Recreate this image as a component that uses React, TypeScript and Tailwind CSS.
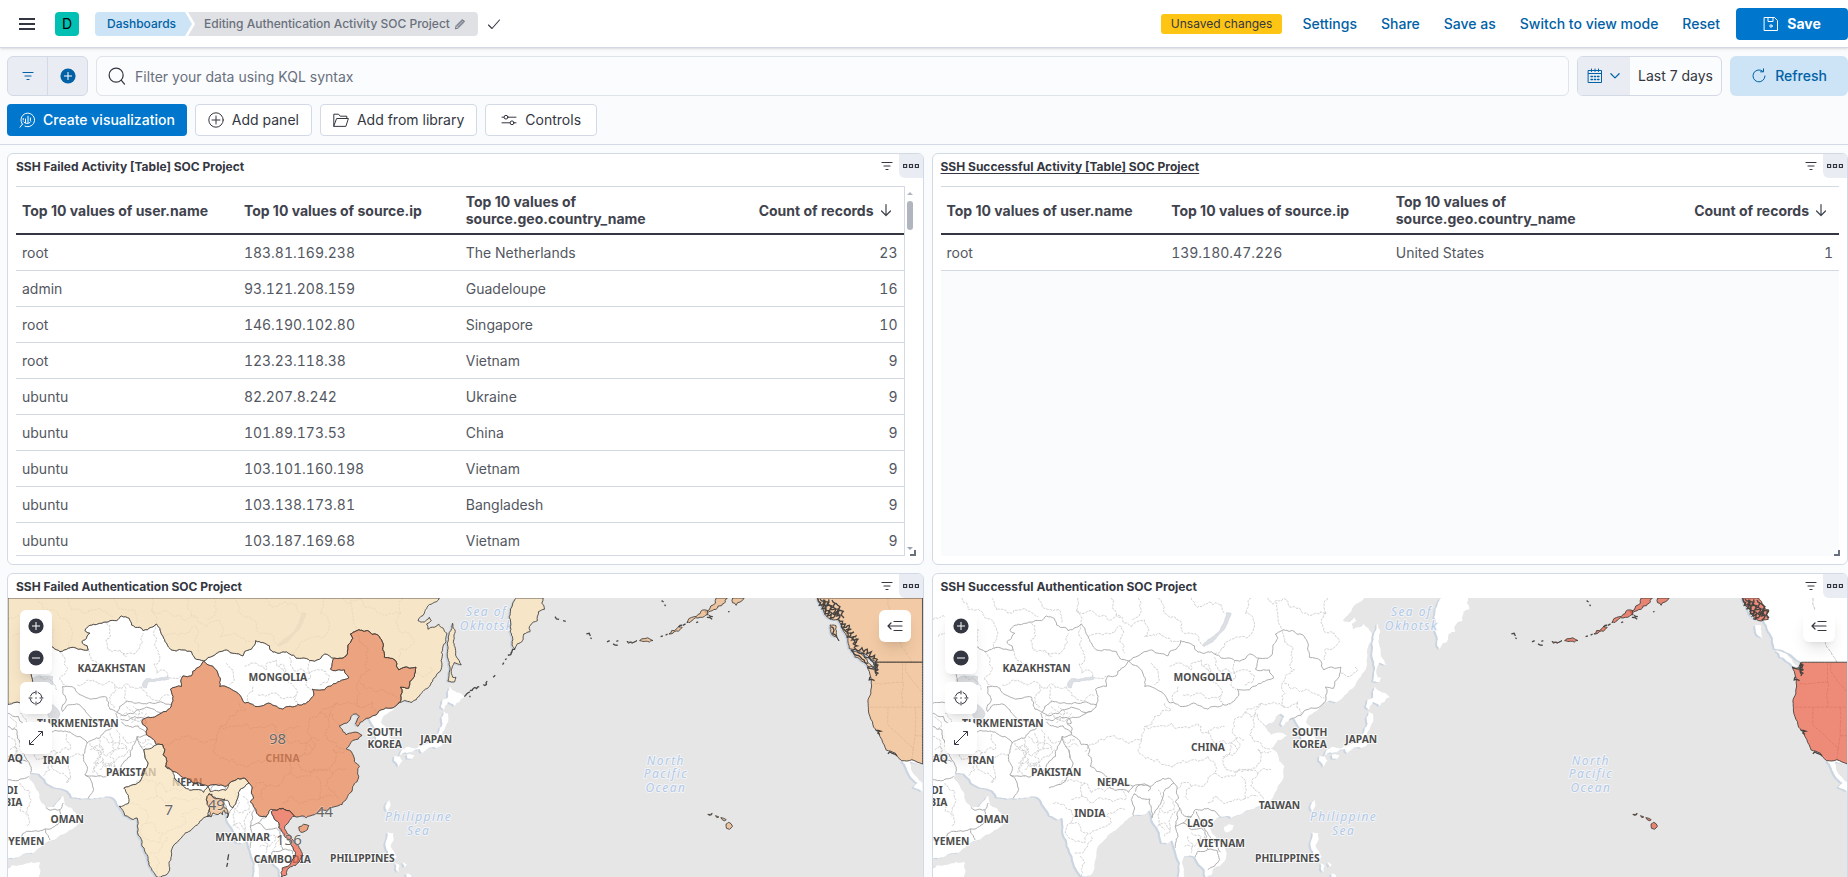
import React from "react";

/* ---------- geometry helpers for the maps ---------- */

type Pt = [number, number];

const parse = (s: string): Pt[] =>
  s.trim().split(/\s+/).map((p) => p.split(",").map(Number) as Pt);

const noise = (x: number, y: number) => {
  const v = Math.sin(Math.round(x) * 12.9898 + Math.round(y) * 78.233) * 43758.5453;
  return (v - Math.floor(v)) * 2 - 1;
};

/* Midpoint displacement; depends on the end points only, so shared borders agree. */
const split = (a: Pt, b: Pt, amp: number, out: Pt[]) => {
  const dx = b[0] - a[0];
  const dy = b[1] - a[1];
  const len = Math.hypot(dx, dy);
  if (len < 9) {
    out.push(b);
    return;
  }
  const mx = (a[0] + b[0]) / 2;
  const my = (a[1] + b[1]) / 2;
  const sign = a[0] < b[0] || (a[0] === b[0] && a[1] < b[1]) ? 1 : -1;
  const d = noise(mx, my) * amp * sign;
  const m: Pt = [mx - dy * d, my + dx * d];
  split(a, m, amp, out);
  split(m, b, amp, out);
};

const path = (s: string, amp = 0.14, closed = false) => {
  const pts = parse(s);
  if (closed) pts.push(pts[0]);
  const out: Pt[] = [pts[0]];
  for (let i = 1; i < pts.length; i++) {
    const edge =
      (pts[i][0] === pts[i - 1][0] && (pts[i][0] <= 24 || pts[i][0] >= 2770)) ||
      (pts[i][1] === pts[i - 1][1] && (pts[i][1] <= 84 || pts[i][1] === 277 || pts[i][1] >= 924));
    split(pts[i - 1], pts[i], edge ? 0 : amp, out);
  }
  return "M" + out.map((p) => p[0].toFixed(1) + " " + p[1].toFixed(1)).join("L") + (closed ? "Z" : "");
};

/* ---------- land ---------- */

const RUSSIA_EAST =
  "1320,84 1300,100 1275,130 1256,152 1275,156 1290,142 1296,152 1282,162 1286,178 1305,172 1318,162 1332,175 1343,190 1340,215 1330,235 1328,285 1315,310 1290,350 1262,375 1235,398 1215,392 1195,402";
const CHINA_NE = "1195,402 1205,385 1203,352 1228,355 1245,320 1250,292 1230,295 1198,300 1190,275 1155,262 1150,240 1135,195 1105,182 1070,183 1053,192 1060,205 1045,240 1040,258 1022,265 1005,265";
const MONGOLIA_N = "1005,265 975,252 960,268 930,272 890,265 870,252 830,248 812,240 810,228 768,212 755,238 735,245 730,258 680,240 640,258 612,273";
const KAZ_N =
  "612,273 585,265 575,245 550,240 510,235 490,200 470,162 455,172 430,182 420,172 395,165 388,145 365,138 350,152 300,160 262,172 255,182 270,190 255,210 246,215 262,228 265,240 235,238 205,235 180,245 160,232 130,225 100,240 92,290 98,335";
const CHINA_S_COAST =
  "1195,402 1175,415 1145,420 1120,438 1095,450 1075,470 1068,462 1080,440 1070,432 1055,440 1048,455 1020,468 1030,485 1040,495 1060,488 1088,497 1060,512 1040,537 1058,550 1065,575 1080,590 1078,620 1060,650 1040,690 1010,710 975,722 945,735 920,745 915,740 885,740";
const CHINA_WEST =
  "885,740 875,728 850,716 830,722 812,720 800,742 775,735 765,715 752,695 762,685 758,655 748,640 735,626 715,626 690,640 675,650 640,645 625,650 610,645 580,640 560,625 530,608 515,605 497,590 500,570 490,555 495,540 488,524 470,525 455,505 440,495 442,475 428,462 428,450 445,442 470,438 500,425 515,405 520,380 512,358 545,350 550,318 575,318 590,295 612,273";
const MONGOLIA_S =
  "612,273 625,285 650,300 662,325 660,350 690,355 715,370 733,398 800,402 850,418 895,404 918,402 935,385 942,378 938,358 975,360 985,350 1020,335 1048,324 1035,300 1000,302 993,298 1005,265";

const CHINA = path(CHINA_NE + " " + MONGOLIA_S.split(" ").reverse().slice(1).join(" ") + " " + CHINA_WEST.split(" ").reverse().slice(1).join(" ") + " " + CHINA_S_COAST.split(" ").reverse().slice(1).join(" "), 0.16, true);
const RUSSIA = path(RUSSIA_EAST + " " + CHINA_NE.split(" ").slice(1).join(" ") + " " + MONGOLIA_N.split(" ").slice(1).join(" ") + " " + KAZ_N.split(" ").slice(1).join(" ") + " 90,380 70,402 45,398 24,404 24,84", 0.16, true);
const INDIA = path(
  "432,540 455,535 470,525 488,524 495,540 490,555 500,570 497,590 520,607 524,625 545,645 580,660 612,668 625,650 632,666 650,662 678,662 690,640 715,626 735,626 748,640 730,655 716,668 712,690 700,714 690,706 684,692 660,688 640,682 628,672 620,690 630,715 626,738 600,755 575,780 545,805 520,830 515,860 510,895 495,918 470,921 450,890 435,845 425,810 415,780 412,745 400,750 375,738 358,710 385,702 372,655 400,645 435,600 445,580 436,565",
  0.16,
  true
);
const BANGLADESH = path("628,672 640,682 660,688 676,688 672,708 680,716 682,745 674,722 655,735 640,730 622,740 630,715 620,690", 0.4, true);
const VIETNAM = path(
  "815,726 830,722 850,716 875,728 885,740 870,752 855,772 862,790 885,820 903,840 905,865 888,888 868,896 862,915 845,924 848,895 865,890 880,868 888,848 872,818 846,785 838,760 822,742",
  0.2,
  true
);
const HAINAN = path("898,772 912,764 928,768 924,780 910,788 900,784", 0.2, true);
const SAKHALIN = path("1350,188 1360,160 1364,200 1368,235 1372,262 1386,285 1365,278 1356,300 1360,322 1370,322 1366,336 1346,334 1352,300 1344,255 1346,215", 0.14, true);
const KAMCHATKA = path("1552,84 1540,105 1533,130 1535,165 1540,200 1547,237 1570,212 1574,192 1592,186 1594,166 1615,152 1618,125 1636,118 1628,100 1632,84", 0.16, true);

const ASIA = path(
  "24,84 " + RUSSIA_EAST +
    " 1182,420 1150,442 1145,458 1165,480 1175,510 1165,532 1140,536 1130,515 1132,490 1124,470 1112,448 1095,450 " +
    "1075,470 1068,462 1080,440 1070,432 1055,440 1048,455 1020,468 1030,485 1040,495 1060,488 1088,497 1060,512 1040,537 1058,550 1065,575 1080,590 1078,620 1060,650 1040,690 1010,710 975,722 945,735 920,745 915,740 885,740 870,752 855,772 862,790 885,820 903,840 905,865 888,888 868,896 862,915 845,924 840,900 822,882 812,862 795,858 780,860 772,880 780,924 762,924 766,880 752,840 742,812 728,822 712,820 706,790 690,765 682,745 674,722 655,735 626,738 600,755 575,780 545,805 520,830 515,860 510,895 495,918 470,921 450,890 435,845 425,810 415,780 412,745 400,750 375,738 358,710 338,683 265,686 215,682 205,665 170,655 140,640 118,612 90,608 86,625 105,650 122,695 138,714 162,712 180,690 190,678 194,705 215,715 241,752 225,772 190,795 145,815 100,850 60,860 24,866",
  0.1,
  true
);
const ISLES = [
  "24,896 70,885 120,878 116,924 24,924",
  "1352,350 1372,368 1396,380 1365,408 1346,396 1336,420 1325,412 1330,390 1346,384",
  "1333,425 1346,432 1342,462 1330,485 1318,512 1340,516 1322,530 1300,532 1268,550 1262,538 1240,545 1218,548 1200,556 1204,546 1230,532 1270,528 1292,508 1318,490 1330,462",
  "1186,558 1202,560 1210,574 1198,592 1192,580 1184,572",
  "1222,556 1245,556 1240,566 1224,566",
  "1172,688 1173,702 1164,725 1158,716 1162,698",
  "1165,788 1182,790 1182,812 1174,832 1184,846 1192,862 1180,870 1166,845 1158,825",
  "1188,880 1200,886 1198,908 1190,900",
  "1210,876 1222,884 1216,892",
  "1222,912 1236,918 1234,924 1222,924",
].map((s) => path(s, 0.16, true));

const CANADA = path("2455,84 2470,110 2485,140 2505,150 2520,148 2540,190 2548,205 2552,236 2586,246 2612,262 2634,277 2772,277 2772,84", 0.1, true);
const USA_WEST = path("2634,277 2636,300 2628,300 2606,291 2616,320 2617,370 2608,396 2614,440 2625,472 2650,510 2663,541 2690,550 2709,573 2740,570 2772,583 2772,277", 0.08, true);
const MEXICO = path("2711,574 2724,594 2735,618 2758,640 2744,652 2772,666 2772,640 2755,622 2738,600 2734,576 2772,586 2740,570", 0.08, true);
const VANCOUVER = path("2558,240 2585,250 2605,268 2626,292 2608,290 2590,274 2570,262", 0.14, true);
const HAIDA = path("2494,165 2512,167 2513,188 2521,213 2504,198 2496,184", 0.16, true);
const PANHANDLE = path("2455,84 2505,84 2515,100 2536,120 2534,148 2520,150 2505,152 2490,148 2482,128 2466,108", 0.2, true);
const ALEUTIANS = [
  "2152,84 2186,84 2176,100 2158,108 2140,122 2124,134 2118,124 2136,108",
  "2202,84 2236,84 2224,96 2212,106 2201,98",
  "2064,158 2070,146 2086,140 2106,124 2126,122 2128,134 2104,142 2080,152",
  "2010,192 2018,182 2034,176 2040,168 2050,172 2038,184 2022,190",
  "1922,212 1938,206 1954,208 1962,212 1940,214",
  "1884,214 1896,216 1914,212 1900,220 1888,220",
].map((s) => path(s, 0.24, true));
const HAWAII = [
  "2182,763 2190,758 2201,770 2192,779 2183,776",
  "2127,734 2140,731 2138,736 2130,737",
  "2166,744 2182,750 2178,754 2170,750",
  "2150,738 2160,742 2154,744",
].map((s) => path(s, 0.16, true));
const SPECKS = [
  "2040,172 2050,166", "1842,222 1856,226", "1852,214 1858,212", "1985,200 1992,198", "2000,196 2006,192", "2052,166 2060,162",
  "2092,158 2098,156", "2124,142 2140,148", "2130,136 2142,140", "1988,92 1994,96", "1997,104 2000,108", "2188,126 2192,124",
  "1762,192 1774,198", "1774,204 1778,206", "1824,216 1832,212",
].map((s) => path(s, 0.5)).join("");
const KURILS = [
  "1395,380 1402,372 1412,366", "1412,362 1422,356 1440,350", "1452,344 1464,334", "1482,322 1488,316", "1510,284 1514,278",
  "1518,270 1522,266", "1526,256 1538,246 1548,238", "1535,250 1540,240", "1410,380 1414,380", "1668,140 1680,148", "1692,152 1700,154",
].map((s) => path(s, 0.4)).join("");

/* Narrow inlets and islets around the Alaskan panhandle and Puget Sound. */
const PANHANDLE_INLETS = [
  "2458,86 2466,98 2462,106 2474,104 2470,116 2482,112 2478,126 2490,122 2486,138 2498,132 2494,148 2506,142",
  "2464,88 2478,92 2474,100 2490,98 2484,108 2500,108 2496,118 2510,116 2506,128 2520,124 2514,138 2530,134",
  "2476,88 2472,110 2484,106 2480,132 2494,128", "2490,88 2486,102 2502,112 2492,124 2512,132 2502,146",
  "2500,90 2510,100 2504,112 2520,118 2512,128 2524,140 2514,150", "2512,100 2524,110 2518,120 2534,124 2528,136 2536,144",
];
const PUGET = [
  "2632,278 2628,288 2638,286 2630,296 2638,300 2630,306 2638,310 2632,318", "2606,292 2618,296 2630,294", "2636,282 2632,312",
  "2616,320 2612,330 2628,332", "2632,482 2646,484 2638,490 2644,494", "2668,552 2674,546 2684,552 2696,558",
];
const BC_INLETS = [
  "2520,150 2532,154 2526,164 2540,162 2532,174 2552,166 2542,180 2558,178 2546,190 2566,186 2552,200 2574,196 2560,210 2578,208 2564,222 2576,228 2566,234",
  "2528,160 2536,178 2548,188 2546,202 2560,204 2568,226", "2556,242 2570,236 2582,242 2590,234 2596,246 2606,238 2604,252 2618,246 2612,260 2628,256 2622,268 2636,268 2628,280",
  "2560,244 2574,256 2586,262 2598,276 2608,280", "2576,244 2594,250 2600,262 2616,270 2626,286", "2498,170 2506,182 2502,192 2514,200",
];
const INLETS_ALASKA = [...PANHANDLE_INLETS, ...PUGET].map((s) => path(s, 0.25)).join("");
const INLETS_ALL = INLETS_ALASKA + BC_INLETS.map((s) => path(s, 0.25)).join("");

/* ---------- base map lines ---------- */

const COUNTRY_LINES = [
  CHINA_NE, MONGOLIA_N, KAZ_N, CHINA_WEST, MONGOLIA_S,
  "1195,402 1175,415 1145,420 1120,438 1095,450",
  "188,425 188,350 225,355 265,385 320,382 330,418 352,428 375,398 410,400 450,398 515,405",
  "188,425 205,405 230,402 255,420 270,440 300,455 340,470 352,462 348,430",
  "352,428 372,438 400,432 412,420 440,412 470,425 500,425",
  "362,448 385,452 405,440 430,445 440,460 428,462",
  "365,456 380,468 415,468 430,480 442,490",
  "100,470 130,488 160,485 200,485 240,500 262,520 300,505 330,480 352,462",
  "262,520 250,555 262,590 255,615 280,655 265,686",
  "255,615 310,622 355,605 370,580 392,560 398,530 412,500 440,495",
  "412,500 432,540 436,565",
  "24,470 50,480 60,530 80,570 92,608",
  "24,430 55,440 70,462 100,470",
  "24,630 60,628 86,620",
  "24,560 50,560 80,575",
  "138,714 150,722 180,720 190,700",
  "180,720 178,760 135,778 80,785 60,805 24,810",
  "135,778 150,812",
  "372,655 400,645 435,600 445,580 436,565 432,540",
  "524,625 545,645 580,660 612,668 625,650",
  "632,666 640,648 660,642 678,655 670,664",
  "628,672 640,682 660,688 676,688 680,716 682,745",
  "628,672 620,690 630,715 626,738",
  "748,640 730,655 716,668 712,690 700,714 690,730 682,745",
  "765,715 752,770 760,800 752,835",
  "752,770 775,760 790,745 800,742",
  "775,760 800,780 830,775 846,800 850,840",
  "812,862 820,845 850,840 880,845 885,870 870,890 850,900",
  "815,726 822,742 838,760 846,785 872,818 888,848",
  "24,400 45,398 70,402 90,425",
].map((s) => path(s, 0.16)).join("");

const REGION_LINES = [
  "24,150 60,140 95,165 130,150 160,180 150,232", "40,200 80,190 120,210 140,230", "110,84 130,120 170,125 200,150 215,200 210,238",
  "200,84 215,120 260,130 300,115 340,140", "340,84 352,110 395,120 410,160", "460,84 455,120 470,160", "455,120 510,130 560,150 590,140 620,170",
  "560,84 570,120 590,140", "490,200 520,190 560,190 590,170 585,215 600,250", "620,170 660,150 660,200 700,190 740,215 768,212",
  "640,84 650,120 620,150", "700,84 720,130 760,150 800,190 835,228", "800,84 830,110 880,100 900,130", "870,252 900,220 960,200 990,170 980,84",
  "1030,84 1060,130 1075,180", "1050,95 1110,110 1140,130 1205,130 1210,84", "1205,130 1195,170 1230,190 1245,215 1205,235 1200,270", "1250,310 1275,320 1300,300 1290,290",
  "320,160 330,180 318,210 325,240 370,250 420,230 430,190", "370,250 380,260", "265,240 275,270 310,280", "470,162 465,220 480,260 470,310", "232,345 260,332 330,335 345,350 425,350", "345,350 342,415",
  "375,350 380,400", "425,350 450,380 510,380", "470,310 520,325 550,318", "180,245 180,330 200,350", "120,320 150,330 170,360",
  "680,280 700,300 690,345", "735,290 760,280 800,300 830,270", "760,350 750,398", "775,375 820,370 890,375 895,404", "830,270 840,330 870,340 890,375",
  "870,262 880,300 930,310 935,360", "930,272 932,310 960,300 990,320 960,345", "840,285 860,300 850,320 880,318",
  "480,545 520,518 600,515 650,510 660,470 740,460 820,462 850,490 900,470", "650,510 640,540 700,570 760,580 820,575 850,560",
  "720,400 740,420 690,440 660,470", "850,490 870,520 940,540 930,470 960,430 1000,435", "940,540 900,560 905,600 960,600", "850,560 870,610 830,650 800,650 790,690",
  "870,610 930,620 960,600 1000,610 1040,600", "960,430 1010,400 1080,412 1120,395 1130,440", "1000,435 1020,468", "1010,400 990,440 980,480 1010,520 1040,537",
  "1080,412 1082,370 1110,300 1105,262 1075,182", "1080,340 1120,360 1170,370 1200,385", "1000,540 1005,580 960,600", "1000,540 1040,545", "950,620 955,690 1000,680",
  "850,700 870,680 930,690 955,690", "1000,610 990,660 1020,690", "895,560 920,520 960,510", "800,650 770,640 758,655",
  "400,645 440,630 470,640 500,670 540,665 560,650", "440,690 470,680 500,700 550,690 600,690", "385,702 440,720 440,760 480,790 520,780 560,760 545,740 600,720",
  "440,760 430,800 480,820 490,790", "450,850 480,840 500,800", "470,921 480,880 465,860", "600,690 590,660", "470,680 480,640",
  "270,540 300,530 320,560 350,540 380,530", "280,580 310,570 330,600 350,570 390,540", "300,510 310,540 290,570 300,620", "330,490 340,520 330,560 345,590",
  "350,480 360,510 355,540", "270,520 300,540 280,610", "362,440 380,428 400,450 420,430 400,410", "380,410 400,425 430,430", "440,430 420,455 395,460",
  "285,530 300,560 320,590 340,580", "310,500 330,520 360,520 380,540", "300,600 320,580 350,590", "370,500 385,520 405,515",
  "410,510 430,520 450,510", "420,530 440,525 460,530", "385,440 395,448 410,452",
  "60,540 100,530 110,570 140,560 150,600 130,620", "120,490 130,540 170,550 210,540 200,490", "170,550 160,600 200,640 210,610 215,560", "215,560 250,555",
  "60,430 80,450 90,500", "24,500 45,510 40,560", "60,640 90,700 80,770", "24,690 60,700 80,740", "30,440 50,460 40,480", "30,540 45,530 60,560",
  "700,660 720,700 700,740 720,780", "730,680 740,740 720,800", "800,790 830,800 810,830 780,830", "790,800 800,850", "840,800 820,840", "710,720 730,730 745,720", "700,770 720,760 740,780",
].map((s) => path(s, 0.28)).join("");

const STATE_LINES =
  path("2668,84 2668,150 2700,210 2740,277", 0.1) +
  path("2628,342 2670,340 2715,338 2710,380 2712,412", 0.06) +
  path("2712,280 2712,338", 0) +
  path("2722,280 2722,305 2740,330 2772,365", 0.1) +
  path("2614,412 2772,412", 0) +
  path("2668,412 2668,465 2745,535 2740,570", 0.03) +
  path("2750,412 2750,500 2742,545", 0.03) +
  path("2750,498 2772,498", 0);

const WATER = [
  "92,330 120,318 158,320 160,345 135,335 118,345 100,350",
  "140,405 160,405 180,430 175,445 185,460 160,470 148,445",
  "428,342 440,326 480,324 504,320 508,328 480,332 446,336 440,354 430,352",
  "920,130 912,150 898,180 870,210 838,230 836,222 866,200 890,172 902,145 906,128",
].map((s) => path(s, 0.1, true)).join("");

type Label = { x: number; y: number; t: string };

const COMMON_LABELS: Label[] = [
  { x: 335, y: 307, t: "KAZAKHSTAN" },
  { x: 835, y: 332, t: "MONGOLIA" },
  { x: 234, y: 471, t: "TURKMENISTAN" },
  { x: 46, y: 577, t: "AQ" },
  { x: 169, y: 583, t: "IRAN" },
  { x: 394, y: 619, t: "PAKISTAN" },
  { x: 36, y: 673, t: "DI" },
  { x: 40, y: 710, t: "BIA" },
  { x: 202, y: 759, t: "OMAN" },
  { x: 79, y: 826, t: "YEMEN" },
  { x: 566, y: 650, t: "NEPAL" },
  { x: 1156, y: 500, t: "SOUTH" },
  { x: 1156, y: 536, t: "KOREA" },
  { x: 1311, y: 519, t: "JAPAN" },
  { x: 1089, y: 876, t: "PHILIPPINES" },
];
const FAILED_LABELS: Label[] = [
  { x: 849, y: 576, t: "CHINA" },
  { x: 729, y: 814, t: "MYANMAR" },
  { x: 848, y: 879, t: "CAMBODIA" },
];
const SUCCESS_LABELS: Label[] = [
  { x: 850, y: 545, t: "CHINA" },
  { x: 495, y: 741, t: "INDIA" },
  { x: 827, y: 773, t: "LAOS" },
  { x: 890, y: 832, t: "VIETNAM" },
  { x: 1065, y: 717, t: "TAIWAN" },
];
const SEAS: Label[] = [
  { x: 1462, y: 139, t: "Sea of" },
  { x: 1462, y: 179, t: "Okhotsk" },
  { x: 1258, y: 755, t: "Philippine" },
  { x: 1258, y: 795, t: "Sea" },
  { x: 2001, y: 586, t: "North" },
  { x: 2001, y: 626, t: "Pacific" },
  { x: 2001, y: 666, t: "Ocean" },
];
const COUNTS: Label[] = [
  { x: 834, y: 522, t: "98" },
  { x: 507, y: 737, t: "7" },
  { x: 650, y: 721, t: "49" },
  { x: 975, y: 743, t: "44" },
  { x: 868, y: 826, t: "136" },
];

const Shape = ({ d, fill }: { d: string; fill: string }) => (
  <path d={d} fill={fill} fillOpacity={0.75} stroke="#3c3a38" strokeOpacity={0.85} strokeWidth={3} strokeLinejoin="round" />
);

function WorldMap({ failed }: { failed: boolean }) {
  const us = failed ? "#eeb887" : "#e7644b";
  const labels = [...COMMON_LABELS, ...(failed ? FAILED_LABELS : SUCCESS_LABELS)];
  return (
    <svg viewBox="24 84 2748 870" className="block w-full bg-[#e6e6e6] font-['Noto_Sans',sans-serif]" role="img" aria-label="Map of events by country">
      <g fill="#cbd5e1">
        <g transform="translate(-6 3)">
          <path d={ASIA} />
          {ISLES.map((d, i) => <path key={i} d={d} />)}
          <path d={SAKHALIN} />
          <path d={KAMCHATKA} />
          <path d={CANADA} />
          <path d={VANCOUVER} />
          <path d={HAIDA} />
          <path d={MEXICO} />
        </g>
      </g>
      <g fill="#ffffff">
        <path d={ASIA} />
        {ISLES.map((d, i) => <path key={i} d={d} />)}
        <path d={SAKHALIN} />
        <path d={KAMCHATKA} />
        <path d={HAINAN} />
        <path d={CANADA} />
        <path d={USA_WEST} />
        <path d={MEXICO} />
        <path d={VANCOUVER} />
        <path d={HAIDA} />
      </g>
      <path d={WATER} fill="#dddfe2" stroke="#cbd5e1" strokeWidth={2} />
      <path d={REGION_LINES} fill="none" stroke="#bdbdbd" strokeWidth={2} strokeDasharray="8 3" />
      <path d={COUNTRY_LINES} fill="none" stroke="#adadad" strokeWidth={3} />
      <path d={STATE_LINES} fill="none" stroke="#c4c4c4" strokeWidth={3} strokeDasharray="10 3" />

      <g fill="#4d4d4d" stroke="#ffffff" strokeOpacity={0.8} strokeWidth={6} strokeLinejoin="round" paintOrder="stroke" textAnchor="middle" fontSize={31} fontWeight={700}>
        {labels.map((l) => <text key={l.t} x={l.x} y={l.y}>{l.t}</text>)}
      </g>
      <g fill="#b3c9e6" stroke="#f2f4f7" strokeWidth={6} strokeLinejoin="round" paintOrder="stroke" textAnchor="middle" fontSize={36} fontStyle="italic" className="tracking-[0.12em]">
        {SEAS.map((l) => <text key={l.t + l.y} x={l.x} y={l.y}>{l.t}</text>)}
      </g>

      {failed && (
        <g>
          <Shape d={RUSSIA} fill="#f4dcb6" />
          <Shape d={SAKHALIN} fill="#f4dcb6" />
          <Shape d={KAMCHATKA} fill="#f4dcb6" />
          <Shape d={CHINA} fill="#e68456" />
          <Shape d={INDIA} fill="#f7e2bc" />
          <Shape d={BANGLADESH} fill="#eeb887" />
          <Shape d={HAINAN} fill="#e68456" />
          <Shape d={VIETNAM} fill="#e7644b" />
          <Shape d={CANADA} fill={us} />
          <Shape d={VANCOUVER} fill={us} />
          <Shape d={HAIDA} fill={us} />
          <path d={KURILS} fill="none" stroke="#4a4845" strokeWidth={4} />
          <path d="M687 854 L684 872 M684 880 L681 892" stroke="#4a4845" strokeWidth={4} />
        </g>
      )}
      {!failed && <Shape d={PANHANDLE} fill={us} />}
      <Shape d={USA_WEST} fill={us} />
      {ALEUTIANS.map((d, i) => <Shape key={i} d={d} fill={us} />)}
      {HAWAII.map((d, i) => <Shape key={i} d={d} fill={us} />)}
      <path d={SPECKS} fill="none" stroke="#4a4845" strokeWidth={4} />
      <path d={failed ? INLETS_ALL : INLETS_ALASKA} fill="none" stroke="#45423f" strokeWidth={4} />

      {failed && (
        <g fill="#696763" stroke="#ffffff" strokeOpacity={0.35} strokeWidth={4} paintOrder="stroke" textAnchor="middle" fontSize={45}>
          {COUNTS.map((l) => <text key={l.t} x={l.x} y={l.y}>{l.t}</text>)}
        </g>
      )}
    </svg>
  );
}

/* ---------- icons ---------- */

const Icon = ({ children, className = "size-4" }: { children: React.ReactNode; className?: string }) => (
  <svg viewBox="0 0 16 16" className={"shrink-0 " + className} fill="none" stroke="currentColor" strokeWidth={1} strokeLinecap="round" strokeLinejoin="round" aria-hidden="true">
    {children}
  </svg>
);

const FilterIcon = () => (
  <Icon><path d="M3 4.5h10M5 8h6M7 11.5h2" strokeWidth={1.2} /></Icon>
);
const BoxesIcon = () => (
  <Icon><path d="M.6 6.5h3v3h-3zM6.5 6.5h3v3h-3zM12.4 6.5h3v3h-3z" strokeWidth={1.2} strokeLinejoin="miter" /></Icon>
);
const FilledCircle = ({ plus }: { plus: boolean }) => (
  <svg viewBox="0 0 16 16" className="size-4" aria-hidden="true">
    <circle cx="8" cy="8" r="7.6" fill="currentColor" />
    <path d={plus ? "M8 4v8M4 8h8" : "M4 8h8"} stroke="#ffffff" strokeWidth={1} />
  </svg>
);
const ArrowDown = () => (
  <Icon><path d="M8 2.5v11M3.5 9 8 13.5 12.5 9" strokeWidth={1.2} /></Icon>
);

/* ---------- tables ---------- */

type Row = [string, string, string, number];

const FAILED_ROWS: Row[] = [
  ["root", "183.81.169.238", "The Netherlands", 23],
  ["admin", "93.121.208.159", "Guadeloupe", 16],
  ["root", "146.190.102.80", "Singapore", 10],
  ["root", "123.23.118.38", "Vietnam", 9],
  ["ubuntu", "82.207.8.242", "Ukraine", 9],
  ["ubuntu", "101.89.173.53", "China", 9],
  ["ubuntu", "103.101.160.198", "Vietnam", 9],
  ["ubuntu", "103.138.173.81", "Bangladesh", 9],
  ["ubuntu", "103.187.169.68", "Vietnam", 9],
];
const SUCCESS_ROWS: Row[] = [["root", "139.180.47.226", "United States", 1]];

function DataTable({ rows }: { rows: Row[] }) {
  const head = "border-t border-t-[#d3dae6] border-b-2 border-b-[#343741] px-1.5 text-left align-middle font-bold";
  const cell = "h-9 border-b border-[#d3dae6] px-1.5";
  return (
    <table className="w-full table-fixed border-separate border-spacing-0 bg-white text-sm leading-[17px] text-[#3f434d]">
      <thead>
        <tr className="h-[49px]">
          <th className={head}>Top 10 values of user.name</th>
          <th className={head}>Top 10 values of source.ip</th>
          <th className={head}>Top 10 values of source.geo.country_name</th>
          <th className={head}>
            <span className="flex items-center justify-end gap-1 pr-1">
              Count of records
              <ArrowDown />
            </span>
          </th>
        </tr>
      </thead>
      <tbody className="tabular-nums text-[#535761]">
        {rows.map((r) => (
          <tr key={r[1]}>
            <td className={cell}>{r[0]}</td>
            <td className={cell}>{r[1]}</td>
            <td className={cell}>{r[2]}</td>
            <td className={cell + " text-right"}>{r[3]}</td>
          </tr>
        ))}
      </tbody>
    </table>
  );
}

/* ---------- panels ---------- */

function Panel({ title, underline, children, className = "" }: { title: string; underline?: boolean; children: React.ReactNode; className?: string }) {
  return (
    <section className={"relative flex min-w-0 flex-col overflow-hidden rounded-md border border-[#d3dae6] bg-white " + className}>
      <header className="flex h-6 shrink-0 items-center">
        <h2 className={"flex-1 px-2 pt-0.5 text-xs font-bold text-[#343741] " + (underline ? "underline underline-offset-2" : "")}>{title}</h2>
        <button aria-label="Panel filters" className="flex size-6 items-center justify-center text-[#343741]"><FilterIcon /></button>
        <button aria-label="Panel options" className="flex size-6 items-center justify-center rounded-bl-md bg-[#e9edf3] text-[#343741]"><BoxesIcon /></button>
      </header>
      {children}
    </section>
  );
}

const ResizeHandle = () => (
  <span className="absolute right-[7px] bottom-2 size-1.5 border-r-2 border-b-2 border-[#69707d]" />
);

const mapButton = "flex size-8 items-center justify-center text-[#343741]";

function MapPanel({ title, failed }: { title: string; failed: boolean }) {
  return (
    <Panel title={title}>
      <div className="relative">
        <WorldMap failed={failed} />
        <div className="absolute top-3 left-3 flex flex-col gap-2">
          <div className="flex flex-col rounded-md bg-white shadow-lg">
            <button aria-label="Zoom in" className={mapButton}><FilledCircle plus /></button>
            <button aria-label="Zoom out" className={mapButton}><FilledCircle plus={false} /></button>
          </div>
          <button aria-label="Fit to data bounds" className={mapButton + " rounded-md bg-white shadow-lg"}>
            <Icon>
              <circle cx="8" cy="8" r="6" strokeDasharray="6.4 3" strokeDashoffset="-1.5" />
              <path d="M8 1v3M8 12v3M1 8h3M12 8h3M8 7.6v.8" />
            </Icon>
          </button>
          <button aria-label="Tools" className={mapButton + " rounded-md bg-white shadow-lg"}>
            <Icon><path d="M1.5 10.5v4h4M10.5 1.5h4v4M2 14 14 2" /></Icon>
          </button>
        </div>
        <button aria-label="Expand layers" className={mapButton + " absolute top-3 right-3 rounded-md bg-white shadow-lg"}>
          <Icon><path d="M1 8h14M4 5 1 8l3 3M7 3.5h8M7 12.5h8" strokeWidth={1.2} /></Icon>
        </button>
      </div>
    </Panel>
  );
}

const navLink = "text-sm font-medium text-[#0061a6]";
const toolButton = "flex h-8 items-center gap-2 rounded border border-[#d3dae6] bg-white text-sm text-[#343741]";

export default function App() {
  return (
    <div className="flex h-screen flex-col overflow-hidden bg-[#fafbfd] font-['Inter',sans-serif] text-[#343741]">
      <header className="relative flex h-12 shrink-0 items-center border-b border-[#d3dae6] bg-white pt-px pl-[19px] shadow">
        <button aria-label="Toggle navigation" className="flex size-4 flex-col justify-center gap-[3px]">
          <span className="h-0.5 w-4 bg-[#343741]" />
          <span className="h-0.5 w-4 bg-[#343741]" />
          <span className="h-0.5 w-4 bg-[#343741]" />
        </button>
        <div className="ml-5 flex size-6 items-center justify-center rounded bg-[#00bfb3] text-sm text-black">D</div>
        <nav aria-label="Breadcrumbs" className="ml-4 flex items-center text-xs font-medium">
          <a href="#dashboards" className="flex h-6 items-center rounded-l bg-[#cce4f5] pr-4 pl-3 text-[#0061a6] [clip-path:polygon(0_0,calc(100%-7px)_0,100%_50%,calc(100%-7px)_100%,0_100%)]">Dashboards</a>
          <span className="-ml-1 flex h-6 items-center gap-1 rounded-r bg-[#e0e1e4] pr-3 pl-4 text-[#69707d] [clip-path:polygon(0_0,100%_0,100%_100%,0_100%,7px_50%)]">
            Editing Authentication Activity SOC Project
            <Icon className="size-3"><path d="m2 14 1-4 8-8 3 3-8 8zM4 11 12 3M5 12l8-8" strokeWidth={1.3} /></Icon>
          </span>
        </nav>
        <span className="ml-2 text-[#343741]"><Icon><path d="m2.5 9 3.5 3.5L13.5 4" strokeWidth={1.1} /></Icon></span>
        <div className="ml-auto flex items-center">
          <span className="mr-5 rounded-[3px] bg-[#fec514] px-2.5 text-xs leading-5 text-[#343741]">Unsaved changes</span>
          <div className="mr-4 flex gap-6">
            <button className={navLink}>Settings</button>
            <button className={navLink}>Share</button>
            <button className={navLink}>Save as</button>
            <button className={navLink}>Switch to view mode</button>
            <button className={navLink}>Reset</button>
          </div>
          <button className="flex h-8 w-28 items-center justify-center gap-2 rounded bg-[#0077cc] text-sm font-bold text-white">
            <Icon><path d="M1.5 1.5h10l3 3v10h-13zM5 1.5v4h5v-4" strokeLinejoin="miter" /><circle cx="8" cy="10" r="1.2" /></Icon>
            Save
          </button>
        </div>
      </header>

      <div className="flex shrink-0 gap-2 pt-2 pl-[7px]">
        <div className="flex h-10 w-[81px] overflow-hidden rounded-md border border-[#d3dae6] bg-[#e9edf3] text-[#0061a6]">
          <button aria-label="Saved queries" className="flex flex-1 items-center justify-center border-r border-[#d3dae6]"><FilterIcon /></button>
          <button aria-label="Add filter" className="flex flex-1 items-center justify-center"><FilledCircle plus /></button>
        </div>
        <label className="flex h-10 flex-1 items-center gap-2 rounded-md border border-[#dfe3ea] bg-[#fbfcfd] px-2.5">
          <Icon className="size-5"><path d="M11.5 11.5 14 14.5" /><circle cx="7.3" cy="7.3" r="5.6" /></Icon>
          <input aria-label="Query" placeholder="Filter your data using KQL syntax" className="w-full bg-transparent pt-0.5 text-sm outline-none placeholder:text-[#69707d]" />
        </label>
        <div className="flex h-10 overflow-hidden rounded-md border border-[#d3dae6] bg-[#fbfcfd]">
          <button aria-label="Date quick select" className="flex w-[52px] items-center justify-center gap-1.5 bg-[#e9edf3] text-[#0061a6]">
            <Icon>
              <path d="M1.5 2.5h13v12h-13zM1.5 5.5h13M4.5 1v2.5M8 1v2.5M11.5 1v2.5" />
              <path d="M4 8.5h1.4M7.3 8.5h1.4M10.6 8.5H12M4 11.5h1.4M7.3 11.5h1.4M10.6 11.5H12" strokeWidth={1.3} />
            </Icon>
            <Icon className="size-3"><path d="m2.5 5 5.5 5.5L13.5 5" strokeWidth={1.6} /></Icon>
          </button>
          <button className="px-2 text-sm">Last 7 days</button>
        </div>
        <button className="flex h-10 w-[118px] items-center justify-center gap-2 rounded-md bg-[#cce4f5] text-sm font-medium text-[#0061a6]">
          <Icon><path d="M12 3.4A6 6 0 1 0 14 8M12.5 .8v3h-3" /></Icon>
          Refresh
        </button>
      </div>

      <div className="flex shrink-0 gap-2 border-b border-[#d3dae6] py-2 pl-[7px]">
        <button className="flex h-8 items-center gap-2 rounded bg-[#0077cc] px-3 text-sm font-medium text-white">
          <Icon>
            <path d="M3.4 12.2A6.8 6.8 0 1 1 6 14.2M3.4 12.2 1 15.2M4.2 8V6.5M6.5 10.5V7M9 10.5V4.2M11.4 8.5V6M4.5 9.8c1.5 2 5.4 2.4 7.2 0" />
          </Icon>
          Create visualization
        </button>
        <button className={toolButton + " px-3"}>
          <Icon><circle cx="8" cy="8" r="7.2" /><path d="M8 4v8M4 8h8" /></Icon>
          Add panel
        </button>
        <button className={toolButton + " px-3"}>
          <Icon><path d="M.8 14V2.2h4.8l1.6 2h6.6v2.3M.8 14 3.6 6.5h11.8L13 14z" /></Icon>
          Add from library
        </button>
        <button className={toolButton + " px-[15px]"}>
          <Icon><circle cx="5" cy="5.2" r="1.9" /><circle cx="11" cy="10.8" r="1.9" /><path d="M1 5.2h2M7 5.2h8M1 10.8h8M13 10.8h2" /></Icon>
          Controls
        </button>
      </div>

      <main className="grid shrink-0 grid-cols-2 content-start gap-2 pt-2 pl-[7px]">
        <Panel title="SSH Failed Activity [Table] SOC Project" className="h-[412px]">
          <div className="m-2 flex min-h-0 flex-1">
            <div className="min-w-0 flex-1 overflow-hidden border-r border-b border-[#d3dae6]">
              <DataTable rows={FAILED_ROWS} />
            </div>
            <div className="flex w-[10px] flex-col items-center pt-1.5 pb-1.5">
              <span className="border-x-[3px] border-b-[3px] border-x-transparent border-b-[#b1b5bd]" />
              <span className="mt-1.5 h-[29px] w-1.5 rounded-full bg-[#b1b5bd]" />
              <span className="mt-auto border-x-[3px] border-t-[3px] border-x-transparent border-t-[#98a2b3]" />
            </div>
          </div>
          <ResizeHandle />
        </Panel>
        <Panel title="SSH Successful Activity [Table] SOC Project" underline className="h-[412px]">
          <div className="m-2 min-h-0 flex-1 bg-[#fafbfd]">
            <DataTable rows={SUCCESS_ROWS} />
          </div>
          <ResizeHandle />
        </Panel>
        <MapPanel title="SSH Failed Authentication SOC Project" failed />
        <MapPanel title="SSH Successful Authentication SOC Project" failed={false} />
      </main>
    </div>
  );
}
